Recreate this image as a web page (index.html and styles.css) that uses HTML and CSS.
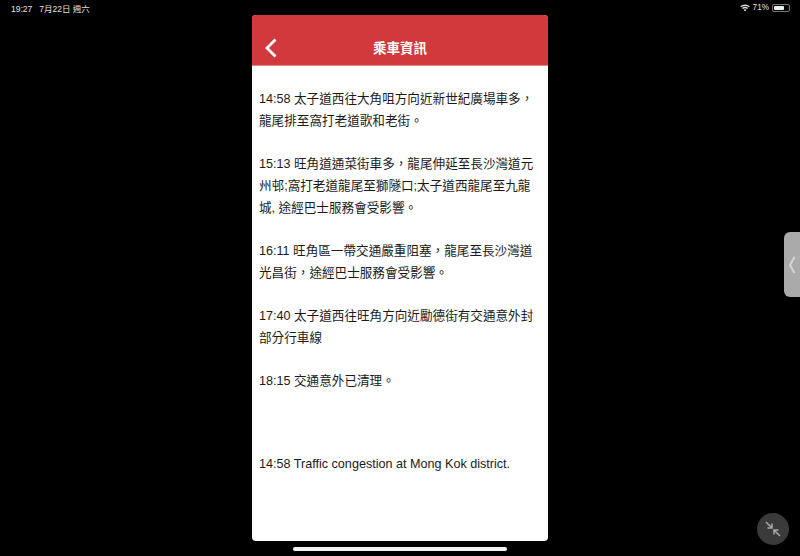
FILE: index.html
```html
<!DOCTYPE html>
<html lang="zh-Hant">
<head>
<meta charset="utf-8">
<title>乘車資訊</title>
<link rel="stylesheet" href="styles.css">
</head>
<body>
<div class="status">
  <div class="status-left"><span>19:27</span><span>7月22日 週六</span></div>
  <div class="status-right">
    <svg class="wifi" viewBox="0 0 12 9" width="10" height="7.500"><path fill="#e0e0e0" d="M6 9 4.300 7a2.500 2.500 0 0 1 3.400 0zM3.500 6.100 2.400 4.900a5.400 5.400 0 0 1 7.200 0L8.500 6.100a3.800 3.800 0 0 0-5 0zM1.500 4 .3 2.800a8.400 8.400 0 0 1 11.400 0L10.500 4a6.700 6.700 0 0 0-9 0z"/></svg>
    <span class="pct">71%</span>
    <span class="battery"><span class="battery-fill"></span></span>
  </div>
</div>
<main class="card">
  <header class="card-head">
    <svg class="back" viewBox="0 0 13 20" width="13" height="20"><path d="M11.500 1.500 3 10l8.500 8.500" fill="none" stroke="#fff" stroke-width="2.800"/></svg>
    <h1>乘車資訊</h1>
  </header>
  <section class="card-body">
    <p>14:58 太子道西往大角咀方向近新世紀廣場車多，龍尾排至窩打老道歌和老街。</p>
    <p>15:13 旺角道通菜街車多，龍尾伸延至長沙灣道元州邨;窩打老道龍尾至獅隧口;太子道西龍尾至九龍城, 途經巴士服務會受影響。</p>
    <p>16:11 旺角區一帶交通嚴重阻塞，龍尾至長沙灣道光昌街，途經巴士服務會受影響。</p>
    <p>17:40 太子道西往旺角方向近勵德街有交通意外封部分行車線</p>
    <p class="last-zh">18:15 交通意外已清理。</p>
    <p>14:58 Traffic congestion at Mong Kok district.</p>
  </section>
</main>
<div class="side-tab">
  <svg viewBox="0 0 8 18" width="8" height="18"><path d="M6.500 1 2 9l4.500 8" fill="none" stroke="#d4d4d4" stroke-width="2"/></svg>
</div>
<div class="shrink">
  <svg viewBox="0 0 18 18" width="18" height="18"><path d="M2 2 8 8M8 3.500V8H3.500M16 16 10 10M10 14.500V10h4.500" fill="none" stroke="#a8a8a8" stroke-width="1.500"/></svg>
</div>
<div class="home-bar"></div>
</body>
</html>
```
FILE: styles.css
```css
html, body {
  margin: 0;
  padding: 0;
  height: 556px;
  overflow: hidden;
  background: #000;
}
body {
  position: relative;
  display: flex;
  flex-direction: column;
  align-items: center;
  font-family: "Liberation Sans", "Noto Sans CJK TC", sans-serif;
}
.status {
  box-sizing: border-box;
  width: 100%;
  height: 15px;
  padding: 0 10px 0 11px;
  display: flex;
  justify-content: space-between;
  align-items: center;
  color: #e0e0e0;
  font-size: 8.500px;
}
.status-left {
  display: flex;
  align-items: baseline;
  gap: 7px;
}
.status-right {
  display: flex;
  align-items: center;
  gap: 3px;
}
.pct {
  font-size: 8.200px;
}
.battery {
  position: relative;
  box-sizing: border-box;
  display: block;
  width: 18px;
  height: 8px;
  padding: 1px;
  border: 1px solid #777;
  border-radius: 2px;
}
.battery-fill {
  display: block;
  width: 70%;
  height: 100%;
  background: #eee;
  border-radius: 1px;
}
.card {
  width: 296px;
  height: 526px;
  background: #fff;
  border-radius: 4px;
  overflow: hidden;
}
.card-head {
  position: relative;
  height: 50px;
  background: #d2393c;
  display: flex;
  align-items: center;
  justify-content: center;
  border-bottom: 1px solid #e08a8a;
}
.back {
  position: absolute;
  left: 12px;
  top: 23px;
}
.card-head h1 {
  margin: 14px 0 0;
  color: #fff;
  font-size: 13.500px;
  font-weight: 700;
}
.card-body {
  padding: 22px 7px 0;
  color: #1a1a1a;
  font-size: 12.600px;
  line-height: 22.300px;
}
.card-body p {
  margin: 0 0 20.300px;
}
.card-body .last-zh {
  margin-bottom: 60.800px;
}
.side-tab {
  position: absolute;
  right: 0;
  top: 232px;
  width: 16px;
  height: 65px;
  background: #aaa;
  border-radius: 6px 0 0 6px;
  display: flex;
  align-items: center;
  justify-content: center;
}
.shrink {
  position: absolute;
  left: 757px;
  top: 513px;
  width: 32px;
  height: 32px;
  border-radius: 50%;
  background: #3a3a3a;
  display: flex;
  align-items: center;
  justify-content: center;
}
.home-bar {
  position: absolute;
  left: 293px;
  top: 547px;
  width: 214px;
  height: 4px;
  border-radius: 2px;
  background: #f4f4f4;
}
```
